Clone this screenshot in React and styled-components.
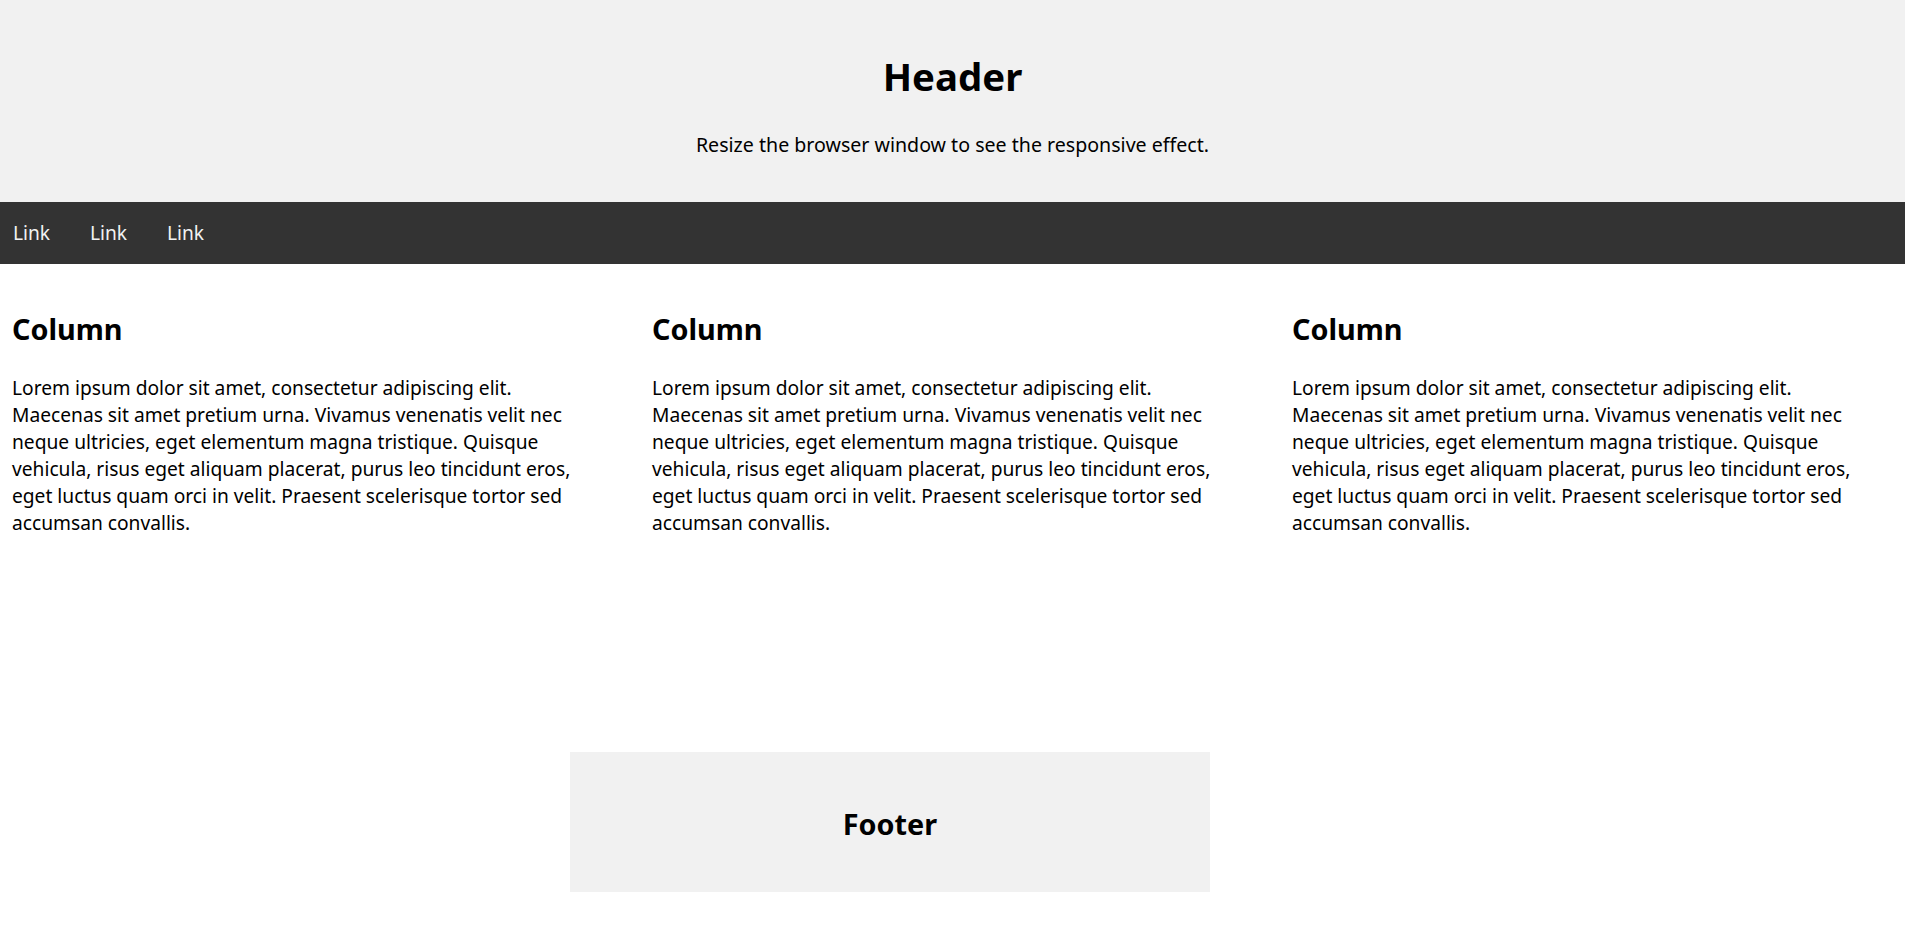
import React from 'react'
import styled, { createGlobalStyle } from 'styled-components'

const GlobalStyle = createGlobalStyle`
  * {
    box-sizing: border-box;
  }
  body {
    margin: 0;
    background: #ffffff;
    color: #000000;
    font-family: "Noto Sans", "Open Sans", "Liberation Sans", sans-serif;
  }
`

const Header = styled.header`
  height: 202px;
  background-color: #f1f1f1;
  text-align: center;
  padding-top: 50px;
`

const Title = styled.h1`
  margin: 0;
  font-size: 38.4px;
  line-height: 52px;
  font-weight: 700;
`

const Subtitle = styled.p`
  margin: 30px 0 0;
  font-size: 19.6px;
  line-height: 26px;
`

const Nav = styled.nav`
  display: flex;
  align-items: center;
  height: 62px;
  background-color: #333;
`

const NavLink = styled.a`
  display: block;
  width: 77px;
  padding-left: 13px;
  color: #f2f2f2;
  font-size: 19.2px;
  line-height: 26px;
  text-decoration: none;
`

const Row = styled.main`
  display: grid;
  grid-template-columns: 640px 640px 1fr;
`

const Column = styled.section`
  padding: 46px 0 0 12px;
`

const ColumnTitle = styled.h2`
  margin: 0 0 26px;
  font-size: 28.8px;
  line-height: 38px;
  font-weight: 700;
`

const Text = styled.p`
  max-width: 580px;
  margin: 0;
  font-size: 19.2px;
  line-height: 27.1px;
`

const FooterWrap = styled.div`
  padding: 215px 0 44px;
`

const Footer = styled.footer`
  display: flex;
  align-items: center;
  justify-content: center;
  width: 640px;
  height: 140px;
  margin-left: 570px;
  padding-top: 3px;
  background-color: #f1f1f1;
  font-size: 28.8px;
  font-weight: 700;
`

const lorem =
  'Lorem ipsum dolor sit amet, consectetur adipiscing elit. Maecenas sit amet pretium urna. Vivamus venenatis velit nec neque ultricies, eget elementum magna tristique. Quisque vehicula, risus eget aliquam placerat, purus leo tincidunt eros, eget luctus quam orci in velit. Praesent scelerisque tortor sed accumsan convallis.'

export default function App() {
  return (
    <>
      <GlobalStyle />
      <Header>
        <Title>Header</Title>
        <Subtitle>Resize the browser window to see the responsive effect.</Subtitle>
      </Header>
      <Nav>
        <NavLink href="#">Link</NavLink>
        <NavLink href="#">Link</NavLink>
        <NavLink href="#">Link</NavLink>
      </Nav>
      <Row>
        {[0, 1, 2].map((i) => (
          <Column key={i}>
            <ColumnTitle>Column</ColumnTitle>
            <Text>{lorem}</Text>
          </Column>
        ))}
      </Row>
      <FooterWrap>
        <Footer>Footer</Footer>
      </FooterWrap>
    </>
  )
}
